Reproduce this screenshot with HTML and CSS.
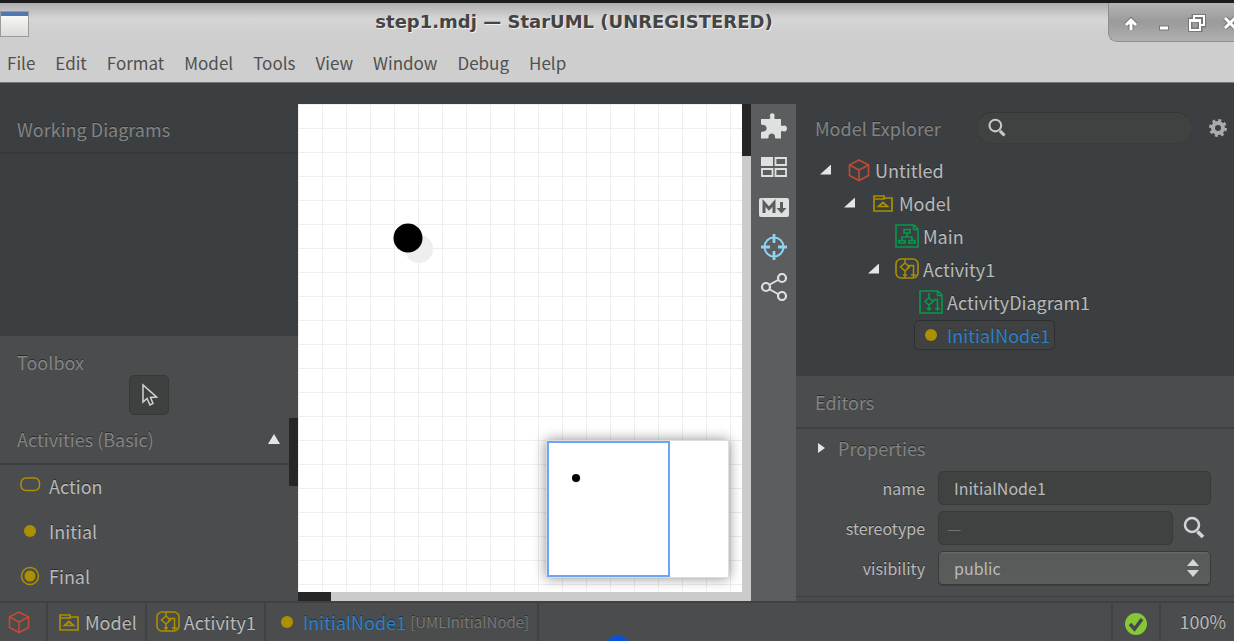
FILE: index.html
```
<!DOCTYPE html>
<html lang="en">
<head>
    <meta charset="UTF-8">
    <meta name="viewport" content="width=device-width, initial-scale=1">
    <title>step1.mdj — StarUML (UNREGISTERED)</title>
    <link rel="stylesheet" href="styles.css">
</head>
<body>
    <!-- shared icons -->
    <svg class="defs" width="0" height="0">
        <symbol id="i-project" viewBox="0 0 24 24">
            <path d="M12 2 L21.5 7 V17.5 L12 22.5 L2.5 17.5 V7 Z M2.5 7 L12 12 L21.5 7 M12 12 V22.5" fill="none" stroke="currentColor" stroke-width="1.6"/>
        </symbol>
        <symbol id="i-model" viewBox="0 0 24 24">
            <path d="M3 20 V5 H13 V7 H21 V20 Z M3 8 H14 M7.5 15.5 L12 11.5 L16.5 15.5 Z" fill="none" stroke="currentColor" stroke-width="1.7"/>
        </symbol>
        <symbol id="i-class-diagram" viewBox="0 0 24 24">
            <path d="M1 1 H19 L23 5 V23 H1 Z M18.5 1 V5.5 H23 M9 5.5 H15 V9 H9 Z M12 9 V13 M7 17 V13 H17 V17 M4 16.5 H10 V19 H4 Z M14 16.5 H20 V19 H14 Z" fill="none" stroke="currentColor" stroke-width="1.6"/>
        </symbol>
        <symbol id="i-activity" viewBox="0 0 24 24">
            <rect x="1" y="2" width="22" height="19" rx="5" fill="none" stroke="currentColor" stroke-width="1.6"/>
            <path d="M10 2 V6 M10 6 L14.5 10 L10 14 L5.500 10 Z M10 14 V21 M12 12 L14.500 8.500 H18.500 V21 M8 18 H12 M16 18 H21" fill="none" stroke="currentColor" stroke-width="1.5"/>
        </symbol>
        <symbol id="i-activity-diagram" viewBox="0 0 24 24">
            <path d="M1 1 H19 L23 5 V23 H1 Z M18.500 1 V5.500 H23 M10 3 V8 M10 8 L14 11.500 L10 15 L6 11.500 Z M10 15 V20 M14 11.500 L15.500 9.500 H18.500 V20 M8 18 L10 20 L12 18 M16.500 18 L18.500 20 L20.500 18" fill="none" stroke="currentColor" stroke-width="1.6"/>
        </symbol>
        <symbol id="i-initial" viewBox="0 0 24 24">
            <circle cx="12" cy="12" r="6" fill="currentColor"/>
        </symbol>
        <symbol id="i-final" viewBox="0 0 24 24">
            <circle cx="12" cy="12" r="8.500" fill="none" stroke="currentColor" stroke-width="1.5"/>
            <circle cx="12" cy="12" r="5.500" fill="currentColor"/>
        </symbol>
        <symbol id="i-action" viewBox="0 0 24 24">
            <rect x="3" y="4" width="18.500" height="12.500" rx="5" fill="none" stroke="currentColor" stroke-width="1.5"/>
        </symbol>
        <symbol id="i-search" viewBox="0 0 24 24">
            <circle cx="10" cy="9" r="7" fill="none" stroke="currentColor" stroke-width="2.500"/>
            <path d="M15.500 15.500 L21 21" stroke="currentColor" stroke-width="3.800"/>
        </symbol>
    </svg>

    <header class="titlebar">
        <svg class="app-icon" width="30" height="28" viewBox="0 0 30 28">
            <defs>
                <linearGradient id="win" x2="0" y2="1"><stop stop-color="#fff"/><stop offset="1" stop-color="#d8dad5"/></linearGradient>
            </defs>
            <rect x="0.500" y="1.500" width="28" height="25" fill="url(#win)" stroke="#999c9c"/>
            <rect x="1" y="2" width="27" height="4" fill="#5277b0"/>
        </svg>
        <h1>step1.mdj — StarUML (UNREGISTERED)</h1>
        <div class="window-btns">
            <button aria-label="Shade"><svg width="18" height="18" viewBox="0 0 18 18"><path d="M9 16 V7 M4 11 L9 6 L14 11" class="edge"/><path d="M9 16 V7 M4 11 L9 6 L14 11" class="line"/></svg></button>
            <button aria-label="Minimize"><svg width="18" height="18" viewBox="0 0 18 18"><path d="M4 14 H14" class="edge"/><path d="M5 14 H13" class="line"/></svg></button>
            <button aria-label="Restore"><svg width="18" height="18" viewBox="0 0 18 18"><path d="M6 5 V2 H16 V11 H13 M2 6 H12 V16 H2 Z" class="edge"/><path d="M6 5 V2 H16 V11 H13 M2 6 H12 V16 H2 Z M2 7 H12" class="line thin"/></svg></button>
            <button aria-label="Close"><svg width="18" height="18" viewBox="0 0 18 18"><path d="M4 4 L14 14 M14 4 L4 14" class="edge"/><path d="M4 4 L14 14 M14 4 L4 14" class="line"/></svg></button>
        </div>
    </header>

    <nav class="menubar">
        <button>File</button>
        <button>Edit</button>
        <button>Format</button>
        <button>Model</button>
        <button>Tools</button>
        <button>View</button>
        <button>Window</button>
        <button>Debug</button>
        <button>Help</button>
    </nav>

    <main class="content">
        <aside class="sidebar">
            <section class="working">
                <h2>Working Diagrams</h2>
            </section>
            <section class="toolbox">
                <h2>Toolbox</h2>
                <button class="select-tool" aria-label="Select">
                    <svg width="18" height="24" viewBox="0 0 18 24"><path d="M3 2 V19 L7 15.500 L10 22 L13 20.500 L10.500 14.500 L16.500 14 Z" fill="none" stroke="#d0d2d2" stroke-width="1.500"/></svg>
                </button>
                <h3>Activities (Basic) <svg width="12" height="10" viewBox="0 0 12 10"><path d="M6 0 L12 10 H0 Z" fill="#e4e6e6"/></svg></h3>
                <ul>
                    <li><svg class="icon yellow"><use href="#i-action"/></svg>Action</li>
                    <li><svg class="icon yellow"><use href="#i-initial"/></svg>Initial</li>
                    <li><svg class="icon yellow"><use href="#i-final"/></svg>Final</li>
                </ul>
                <div class="scroll-thumb"></div>
            </section>
        </aside>

        <section class="editor">
            <div class="canvas">
                <svg class="node" width="42" height="42" viewBox="0 0 42 42">
                    <circle cx="26" cy="26" r="14" fill="#eee"/>
                    <circle cx="15" cy="15" r="14.500" fill="#000"/>
                </svg>
                <div class="minimap">
                    <div class="viewport"></div>
                    <svg class="mini-node" width="10" height="10" viewBox="0 0 10 10"><circle cx="6" cy="6" r="4" fill="#eee"/><circle cx="5" cy="5" r="4" fill="#000"/></svg>
                </div>
            </div>
            <div class="vscroll"><div></div></div>
            <div class="hscroll"><div></div></div>
        </section>

        <div class="toolbar">
            <button aria-label="Extensions">
                <svg width="28" height="28" viewBox="0 0 28 28"><path d="M1 6 H8 C10.500 6 10.500 5 10 3.500 C9 -1 15.500 -1 14.500 3.500 C14 5 14 6 16.500 6 H21 V11.500 C21 13.500 22.500 13 24 12.500 C28 12 28 19 24 18.500 C22.500 18 21 17.500 21 19.500 V25.500 H16 C14.500 25.500 15 24 15 23 C14.500 19.500 9 19.500 8.500 23 C8.500 24 9 25.500 7.500 25.500 H1 V20 C1 18.500 2.500 18.500 4 18.500 C7.500 18 7.500 12.500 4 12 C2.500 12 1 12 1 10.500 Z" fill="#dfe1e1"/></svg>
            </button>
            <button aria-label="Diagram thumbnails">
                <svg width="28" height="28" viewBox="0 0 28 28"><path d="M1 4 H13 V13 H1 Z" fill="#dfe1e1"/><path d="M15.500 5 H26 V12 H15.500 Z M2 16 H12.500 V23 H2 Z M15.500 16 H26 V23 H15.500 Z" fill="none" stroke="#dfe1e1" stroke-width="1.800"/></svg>
            </button>
            <button aria-label="Markdown">
                <svg width="30" height="28" viewBox="0 0 30 28"><rect x="0" y="5" width="30" height="19" rx="2" fill="#dfe1e1"/><path d="M5 20 V10 L10 15.500 L15 10 V20 M22.500 9 V17" fill="none" stroke="#5b5d5e" stroke-width="3"/><path d="M17.500 15 H27.500 L22.500 20.500 Z" fill="#5b5d5e"/></svg>
            </button>
            <button aria-label="Show minimap">
                <svg width="28" height="28" viewBox="0 0 28 28"><circle cx="14" cy="14" r="9.500" fill="none" stroke="#8ed4f2" stroke-width="2"/><path d="M14 1 V10 M14 18 V27 M1 14 H10 M18 14 H27" stroke="#8ed4f2" stroke-width="2.800"/></svg>
            </button>
            <button aria-label="Share">
                <svg width="28" height="28" viewBox="0 0 28 28"><path d="M9 12 L18 7 M9 16 L18 21" stroke="#dfe1e1" stroke-width="2"/><g fill="none" stroke="#dfe1e1" stroke-width="2.200"><circle cx="6" cy="14" r="4"/><circle cx="22" cy="5" r="4"/><circle cx="22" cy="23" r="4"/></g></svg>
            </button>
        </div>

        <aside class="right">
            <section class="explorer">
                <div class="explorer-head">
                    <h2>Model Explorer</h2>
                    <div class="search">
                        <svg class="search-icon"><use href="#i-search"/></svg>
                        <input type="text" aria-label="Search model">
                    </div>
                    <button aria-label="Settings">
                        <svg width="20" height="20" viewBox="0 0 20 20"><circle cx="10" cy="10" r="7.500" fill="none" stroke="#a8acad" stroke-width="3" stroke-dasharray="3 2.890"/><circle cx="10" cy="10" r="5" fill="none" stroke="#a8acad" stroke-width="4"/></svg>
                    </button>
                </div>
                <ul class="tree">
                    <li class="lv0"><i class="open"></i><span><svg class="icon red"><use href="#i-project"/></svg>Untitled</span></li>
                    <li class="lv1"><i class="open"></i><span><svg class="icon yellow"><use href="#i-model"/></svg>Model</span></li>
                    <li class="lv2"><i></i><span><svg class="icon green"><use href="#i-class-diagram"/></svg>Main</span></li>
                    <li class="lv2"><i class="open"></i><span><svg class="icon yellow"><use href="#i-activity"/></svg>Activity1</span></li>
                    <li class="lv3"><i></i><span><svg class="icon green"><use href="#i-activity-diagram"/></svg>ActivityDiagram1</span></li>
                    <li class="lv3"><i></i><span class="selected"><svg class="icon yellow"><use href="#i-initial"/></svg>InitialNode1</span></li>
                </ul>
            </section>
            <section class="editors">
                <h2>Editors</h2>
                <form class="props">
                    <h3><svg width="7" height="12" viewBox="0 0 7 12"><path d="M0 1 L7 6 L0 11 Z" fill="#e4e6e6"/></svg>Properties</h3>
                    <div class="row">
                        <label for="name">name</label>
                        <input id="name" type="text" value="InitialNode1">
                    </div>
                    <div class="row">
                        <label for="stereotype">stereotype</label>
                        <input id="stereotype" type="text" placeholder="—">
                        <button type="button" aria-label="Find stereotype"><svg class="find-icon"><use href="#i-search"/></svg></button>
                    </div>
                    <div class="row">
                        <label for="visibility">visibility</label>
                        <div class="select">
                            <select id="visibility">
                                <option>public</option>
                                <option>protected</option>
                                <option>private</option>
                                <option>package</option>
                            </select>
                            <svg width="12" height="18" viewBox="0 0 12 18"><path d="M6 0 L12 7 H0 Z M6 18 L12 11 H0 Z" fill="#d4d6d6"/></svg>
                        </div>
                    </div>
                </form>
            </section>
        </aside>
    </main>

    <footer class="statusbar">
        <div class="crumb root"><svg class="icon red"><use href="#i-project"/></svg></div>
        <div class="crumb"><svg class="icon yellow"><use href="#i-model"/></svg>Model</div>
        <div class="crumb"><svg class="icon yellow"><use href="#i-activity"/></svg>Activity1</div>
        <div class="crumb current"><svg class="icon yellow"><use href="#i-initial"/></svg><b>InitialNode1</b><small>[UMLInitialNode]</small></div>
        <div class="valid">
            <svg width="22" height="22" viewBox="0 0 22 22"><circle cx="11" cy="11" r="11" fill="#86c738"/><path d="M5 11 L9.500 16 L17 6" fill="none" stroke="#44484a" stroke-width="3.500"/></svg>
        </div>
        <div class="zoom">100%</div>
        <svg class="marker" width="22" height="6" viewBox="0 0 22 6"><path d="M0 6 Q11 -5 22 6 Z" fill="#0a50dc"/></svg>
    </footer>
</body>
</html>
```

FILE: styles.css
```
*{
    box-sizing: border-box;
}
body{
    margin: 0;
    height: 100vh;
    display: flex;
    flex-direction: column;
    overflow: hidden;
    background-color: #3b3f41;
    color: #b8baba;
    font-family: "Noto Sans CJK SC", "Noto Sans", sans-serif;
    font-size: 18px;
    line-height: 24px;
}
h1, h2, h3, ul{
    margin: 0;
    padding: 0;
    list-style: none;
}
h2, h3{
    font-size: 18px;
    font-weight: normal;
    color: #828484;
    text-shadow: 0 -1px #2a2c2c;
}
button{
    padding: 0;
    border: 0;
    background: none;
    color: inherit;
    font: inherit;
}
svg{
    display: block;
    flex: none;
}
.defs{
    position: absolute;
}
.icon{
    width: 24px;
    height: 24px;
}
.red{
    color: #c14a35;
}
.yellow{
    color: #ab9000;
}
.green{
    color: #069a4a;
}

/* title bar */
.titlebar{
    display: flex;
    align-items: flex-start;
    height: 45px;
    border-top: 3px solid #1b1b1b;
    background: linear-gradient(#aeaeae, #d6d6d6 16px, #cecece 30px);
}
.app-icon{
    margin-top: 7px;
}
.titlebar h1{
    flex: 1;
    padding: 7px 0 0 10px;
    text-align: center;
    font: bold 18px/24px "DejaVu Sans", sans-serif;
    color: #444;
    text-shadow: 1px 1px #f0f0f0;
}
.window-btns{
    display: flex;
    align-items: center;
    gap: 15px;
    width: 126px;
    height: 39px;
    padding: 2px 0 0 13px;
    overflow: hidden;
    border: 1px solid #8e8e8e;
    border-width: 0 0 1px 1px;
    border-bottom-left-radius: 9px;
    background: linear-gradient(#b4b4b4, #9a9a9a 50%, #b0b0b0);
}
.edge, .line{
    fill: none;
    stroke: #777;
    stroke-width: 5;
}
.line{
    stroke: #fff;
    stroke-width: 3;
}
.thin{
    stroke-width: 2;
}

.menubar{
    display: flex;
    gap: 20px;
    height: 38px;
    padding: 0 0 1px 7px;
    border-bottom: 1px solid #777;
    background-color: #cecece;
    color: #505050;
    font-size: 17px;
}

/* left side */
.content{
    flex: 1;
    display: flex;
    min-height: 0;
}
.sidebar{
    width: 298px;
    display: flex;
    flex-direction: column;
}
.working{
    flex: 1;
}
.working h2{
    padding: 34px 17px 11px;
    border-bottom: 2px solid #35393b;
}
.toolbox{
    position: relative;
    padding: 14px 0 1px;
    background-color: #4b4c4d;
}
.toolbox h2{
    padding: 0 17px 1px;
}
.select-tool{
    display: flex;
    align-items: center;
    justify-content: center;
    width: 40px;
    height: 40px;
    margin: 0 auto;
    border: 1px solid #373939;
    border-radius: 5px;
    background-color: #3f4140;
}
.toolbox h3{
    display: flex;
    justify-content: space-between;
    align-items: center;
    height: 50px;
    padding: 0 18px 0 17px;
    border-bottom: 2px solid #3b3e40;
}
.toolbox ul{
    padding: 0 0 0 18px;
    text-shadow: 0 -1px #2a2c2c;
}
.toolbox li{
    display: flex;
    align-items: center;
    gap: 7px;
    height: 45px;
    padding-bottom: 4px;
}
.scroll-thumb{
    position: absolute;
    right: 0;
    top: 82px;
    width: 9px;
    height: 68px;
    background-color: #262626;
}

/* diagram */
.editor{
    flex: 1;
    display: grid;
    grid-template-columns: 1fr 9px;
    grid-template-rows: 1fr 9px;
    margin-top: 21px;
    background-color: #cbcbcb;
}
.canvas{
    position: relative;
    overflow: hidden;
    background-color: #fff;
    background-image: linear-gradient(#eee 1px, transparent 1px), linear-gradient(90deg, #eee 1px, transparent 1px);
    background-size: 24px 24px;
}
.node{
    position: absolute;
    left: 95px;
    top: 119px;
}
.minimap{
    position: absolute;
    right: 13px;
    bottom: 14px;
    width: 183px;
    height: 138px;
    border: 1px solid #ddd;
    background-color: #fff;
    box-shadow: 0 0 12px rgba(0, 0, 0, .45);
}
.viewport{
    width: 123px;
    height: 136px;
    border: 2px solid #6aa5f8;
}
.mini-node{
    position: absolute;
    left: 24px;
    top: 32px;
}
.vscroll div{
    height: 52px;
    background-color: #262626;
}
.hscroll div{
    width: 33px;
    height: 9px;
    background-color: #262626;
}
.toolbar{
    display: flex;
    flex-direction: column;
    align-items: center;
    gap: 12px;
    width: 45px;
    margin-top: 21px;
    padding-top: 9px;
    background-color: #5b5d5e;
}

/* right side */
.right{
    width: 438px;
    display: flex;
    flex-direction: column;
}
.explorer{
    flex: 1;
}
.explorer-head{
    display: flex;
    align-items: center;
    padding: 29px 6px 0 19px;
}
.explorer-head h2{
    flex: 1;
}
.search{
    display: flex;
    align-items: center;
    width: 217px;
    height: 32px;
    margin-right: 15px;
    padding-left: 10px;
    border: 1px solid #3a3c3b;
    border-top-color: #353737;
    border-radius: 16px;
    background-color: #404241;
}
.search-icon{
    width: 20px;
    height: 20px;
    color: #c8caca;
}
.search input{
    flex: 1;
    min-width: 0;
    border: 0;
    outline: none;
    background: none;
    color: #b8baba;
}
.tree{
    padding: 9px 0 0 24px;
    text-shadow: 0 -1px #2a2c2c;
}
.tree li{
    display: flex;
    align-items: center;
    height: 33px;
}
.tree .lv1{
    padding-left: 24px;
}
.tree .lv2{
    padding-left: 48px;
}
.tree .lv3{
    padding-left: 72px;
}
.tree i{
    width: 23px;
}
.tree .open::before{
    content: "";
    display: block;
    width: 11px;
    height: 10px;
    background-color: #e4e6e6;
    clip-path: polygon(100% 0, 100% 100%, 0 100%);
}
.tree span{
    display: flex;
    align-items: center;
    gap: 4px;
    height: 30px;
    padding: 0 4px;
    border: 1px solid transparent;
    margin-left: -1px;
}
.tree .selected{
    border-color: #2d3030;
    border-radius: 5px;
    background-color: #404241;
    color: #2a80cb;
}
.editors{
    padding-bottom: 4px;
    background-color: #4b4c4d;
}
.editors h2{
    padding: 14px 19px 13px;
}
.editors .props{
    padding: 7px 23px 11px 0;
    border-top: 2px solid #3f4142;
    border-bottom: 1px solid #3b3e40;
    font-size: 16px;
    text-shadow: 0 -1px #2a2c2c;
}
.props h3{
    display: flex;
    align-items: center;
    gap: 13px;
    margin-bottom: 11px;
    padding-left: 22px;
}
.row{
    display: flex;
    align-items: center;
    height: 34px;
    margin-bottom: 6px;
}
.row:last-child{
    margin-bottom: 0;
}
.row label{
    width: 129px;
    margin-right: 13px;
    text-align: right;
}
.row input, .row select{
    flex: 1;
    min-width: 0;
    width: 100%;
    height: 34px;
    padding: 0 15px;
    border: 1px solid #383a3a;
    border-radius: 5px;
    background-color: #404241;
    color: #b8baba;
    font: 16px/24px "Noto Sans CJK SC", "Noto Sans", sans-serif;
}
#stereotype{
    padding: 0 8px;
}
#stereotype::placeholder{
    color: #717373;
}
.row button{
    width: 38px;
    padding-left: 9px;
}
.find-icon{
    width: 24px;
    height: 24px;
    color: #d4d6d6;
}
.select{
    position: relative;
    flex: 1;
}
.row select{
    appearance: none;
    display: block;
    background: linear-gradient(#666 1px, #585a59 2px, #5b5d5c);
    box-shadow: 0 1px #3a3c3d;
}
.select svg{
    position: absolute;
    right: 12px;
    top: 8px;
    pointer-events: none;
}

/* status bar */
.statusbar{
    position: relative;
    display: flex;
    height: 40px;
    border-top: 2px solid #3f4244;
    background-color: #4b4c4d;
    text-shadow: 0 -1px #2a2c2c;
}
.crumb{
    display: flex;
    align-items: center;
    gap: 4px;
    padding: 0 8px 1px 9px;
    border-right: 2px solid #3e4244;
}
.crumb.root{
    width: 48px;
    padding-left: 7px;
}
.crumb b{
    font-weight: normal;
    color: #2a80cb;
}
.crumb small{
    font-size: 15px;
    color: #777979;
}
.valid{
    display: flex;
    align-items: center;
    margin-left: auto;
    padding: 4px 12px 0;
    border: 2px solid #3e4244;
    border-width: 0 2px;
}
.zoom{
    width: 73px;
    padding: 6px 8px 0 0;
    text-align: right;
}
.marker{
    position: absolute;
    left: 607px;
    bottom: 0;
}
```
